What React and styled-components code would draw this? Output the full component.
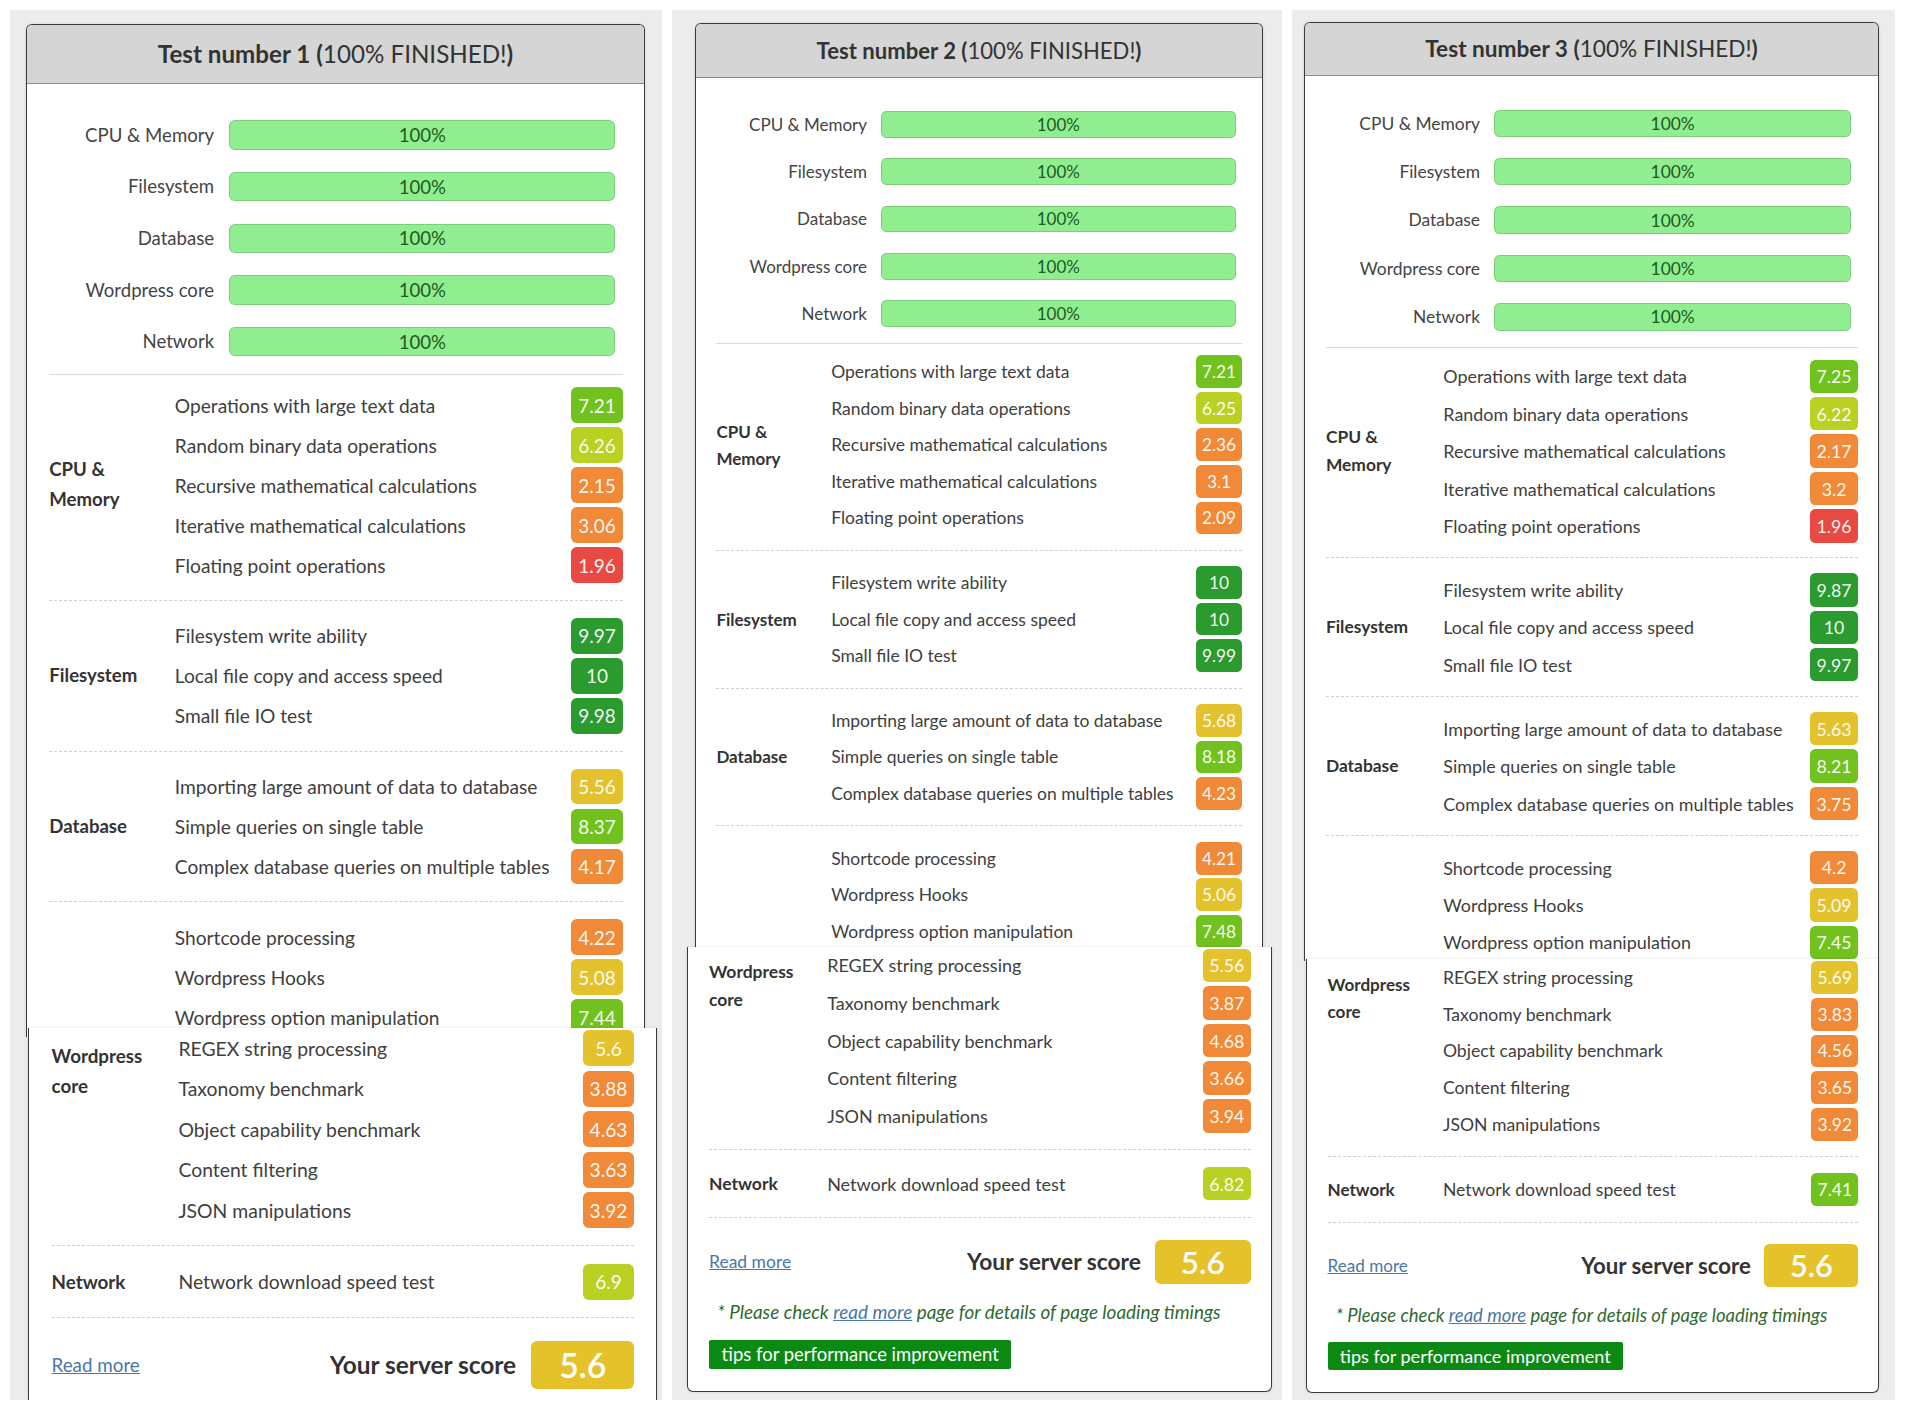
import React from "react";
import styled, { createGlobalStyle } from "styled-components";

const GlobalStyle = createGlobalStyle`
  html, body { margin: 0; padding: 0; background: #ffffff; }
  body {
    font-family: Lato, "Open Sans", "Liberation Sans", sans-serif;
    color: #404040;
  }
  * { box-sizing: border-box; }
`;

/* ---------- layout ---------- */

const Board = styled.main`
  display: flex;
  gap: 10px;
  width: 1905px;
  padding: 10px 10px 0;
`;

const Frame = styled.section`
  flex: 0 0 ${(p) => p.$w}px;
  height: 1390px;
  padding-top: ${(p) => p.$top}px;
  background: #ececec;
  overflow: hidden;
  display: flex;
  flex-direction: column;
`;

const Slice = styled.div`
  position: relative;
  z-index: ${(p) => (p.$head ? 0 : 1)};
  font-size: ${(p) => p.$fs}px;
  margin: ${(p) => (p.$lift ? -p.$lift : 0)}px ${(p) => p.$r}px 0 ${(p) => p.$l}px;
  background: #ffffff;
  border-left: 1.5px solid #3b3b3b;
  border-right: 1.5px solid #3b3b3b;
  border-top: ${(p) => (p.$head ? "1.5px solid #3b3b3b" : "none")};
  border-bottom: ${(p) => (p.$foot ? "1.5px solid #3b3b3b" : "none")};
  border-radius: ${(p) => (p.$head ? "6px 6px 0 0" : p.$foot ? "0 0 6px 6px" : "0")};
  box-shadow: 0 0 3px rgba(0, 0, 0, 0.12);
  flex: ${(p) => (p.$open ? "1 0 auto" : "none")};
  padding-bottom: ${(p) => (p.$foot ? "1.26em" : "0")};
`;

/* ---------- header ---------- */

const Header = styled.header`
  height: ${(p) => p.$h}em;
  display: flex;
  align-items: center;
  justify-content: center;
  background: #d5d5d5;
  border-bottom: 1px solid #8c8c8c;
  border-radius: 5px 5px 0 0;
`;

const Title = styled.h2`
  margin: 0;
  font-size: 1.3em;
  font-weight: 700;
  color: #333333;
  white-space: nowrap;
`;

const TitleNote = styled.span`
  font-weight: 400;
`;

/* ---------- progress bars ---------- */

const Bars = styled.div`
  display: grid;
  grid-template-columns: 10.06em 1fr;
  column-gap: 0.82em;
  row-gap: 1.2em;
  align-items: center;
  padding: 1.95em 1.55em 0.95em 0;
`;

const BarLabel = styled.span`
  text-align: right;
  white-space: nowrap;
  color: #444444;
  line-height: 1;
`;

const Track = styled.div`
  position: relative;
  height: 1.58em;
  border-radius: 0.3em;
  background: #e6e6e6;
  overflow: hidden;
`;

const Fill = styled.div`
  height: 100%;
  background: #90ee90;
  border: 1px solid #7ccd7c;
  border-radius: 0.3em;
`;

const BarText = styled.span`
  position: absolute;
  inset: 0;
  display: flex;
  align-items: center;
  justify-content: center;
  color: #1f5a1f;
`;

const Rule = styled.hr`
  margin: 0 1.15em 0 1.2em;
  border: 0;
  border-top: 1px solid #dadada;
`;

/* ---------- result sections ---------- */

const Section = styled.div`
  display: grid;
  grid-template-columns: 6.75em 1fr;
  margin: 0 1.15em 0 1.2em;
  padding: ${(p) => p.$pt}em 0 ${(p) => p.$pb}em;
  border-bottom: ${(p) => (p.$dash ? "1px dashed #cfcfcf" : "none")};
`;

const Category = styled.div`
  align-self: ${(p) => (p.$top ? "start" : "center")};
  padding-top: ${(p) => (p.$top ? "0.68em" : "0")};
  max-width: 5.6em;
  font-weight: 700;
  line-height: 1.6;
  color: #333333;
`;

const Rows = styled.div`
  display: flex;
  flex-direction: column;
`;

const Row = styled.div`
  height: 2.15em;
  display: flex;
  align-items: center;
  justify-content: space-between;
  gap: 0.6em;
`;

const RowName = styled.span`
  font-size: 1.03em;
  white-space: nowrap;
  color: #404040;
`;

const Badge = styled.span`
  flex: 0 0 2.7em;
  height: 1.88em;
  border-radius: 0.3em;
  display: flex;
  align-items: center;
  justify-content: center;
  font-size: 1.02em;
  color: rgba(255, 255, 255, 0.95);
  background: ${(p) => p.$bg};
`;

/* ---------- footer ---------- */

const ScoreRow = styled.div`
  display: flex;
  align-items: center;
  justify-content: space-between;
  margin: 0 1.15em 0 1.2em;
  padding-top: 1.26em;
`;

const ReadMore = styled.a`
  color: #4a77a6;
  text-decoration: underline;
  cursor: pointer;
`;

const ScoreGroup = styled.div`
  display: flex;
  align-items: center;
  gap: 0.8em;
`;

const ScoreLabel = styled.span`
  font-size: 1.3em;
  font-weight: 700;
  color: #333333;
`;

const ScoreBadge = styled.span`
  font-size: 1.8em;
  font-weight: 600;
  width: 3.05em;
  height: 1.39em;
  border-radius: 0.18em;
  display: flex;
  align-items: center;
  justify-content: center;
  color: #ffffff;
  background: #e6c22a;
`;

const Note = styled.p`
  margin: 0.85em 1.15em 0 1.55em;
  font-size: 1.08em;
  font-style: italic;
  line-height: 1.3;
  color: #2f6a2f;
`;

const NoteLink = styled.a`
  color: #4a77a6;
  text-decoration: underline;
`;

const Tips = styled.a`
  display: inline-block;
  margin: 0.85em 0 0 1.14em;
  font-size: 1.055em;
  height: 1.58em;
  line-height: 1.58em;
  padding: 0 0.68em;
  border-radius: 2px;
  background: #0b8a13;
  color: #ffffff;
  white-space: nowrap;
`;

/* ---------- data ---------- */

const GROUPS = [
  { key: "cpu", label: "CPU & Memory" },
  { key: "fs", label: "Filesystem" },
  { key: "db", label: "Database" },
  { key: "wp", label: "Wordpress core" },
  { key: "net", label: "Network" },
];

const NAMES = {
  cpu: [
    "Operations with large text data",
    "Random binary data operations",
    "Recursive mathematical calculations",
    "Iterative mathematical calculations",
    "Floating point operations",
  ],
  fs: ["Filesystem write ability", "Local file copy and access speed", "Small file IO test"],
  db: [
    "Importing large amount of data to database",
    "Simple queries on single table",
    "Complex database queries on multiple tables",
  ],
  wpA: ["Shortcode processing", "Wordpress Hooks", "Wordpress option manipulation"],
  wpB: [
    "REGEX string processing",
    "Taxonomy benchmark",
    "Object capability benchmark",
    "Content filtering",
    "JSON manipulations",
  ],
  net: ["Network download speed test"],
};

const TESTS = [
  {
    n: 1,
    width: 652,
    top: 14,
    header: 3.17,
    upper: { fs: 18.6, l: 16, r: 17, pad: 0.8 },
    lower: { fs: 18.8, l: 18, r: 5, pad: 0.8, lift: 9 },
    open: true,
    scores: {
      cpu: ["7.21", "6.26", "2.15", "3.06", "1.96"],
      fs: ["9.97", "10", "9.98"],
      db: ["5.56", "8.37", "4.17"],
      wpA: ["4.22", "5.08", "7.44"],
      wpB: ["5.6", "3.88", "4.63", "3.63", "3.92"],
      net: ["6.9"],
    },
  },
  {
    n: 2,
    width: 610,
    top: 13,
    header: 3.17,
    upper: { fs: 17, l: 23, r: 19, pad: 0.8 },
    lower: { fs: 17.5, l: 15, r: 10, pad: 0.83, lift: 3 },
    open: false,
    scores: {
      cpu: ["7.21", "6.25", "2.36", "3.1", "2.09"],
      fs: ["10", "10", "9.99"],
      db: ["5.68", "8.18", "4.23"],
      wpA: ["4.21", "5.06", "7.48"],
      wpB: ["5.56", "3.87", "4.68", "3.66", "3.94"],
      net: ["6.82"],
    },
  },
  {
    n: 3,
    width: 603,
    top: 12,
    header: 3.03,
    upper: { fs: 17.4, l: 12, r: 16, pad: 0.735 },
    lower: { fs: 17.1, l: 14, r: 16, pad: 0.8, lift: 2 },
    open: false,
    scores: {
      cpu: ["7.25", "6.22", "2.17", "3.2", "1.96"],
      fs: ["9.87", "10", "9.97"],
      db: ["5.63", "8.21", "3.75"],
      wpA: ["4.2", "5.09", "7.45"],
      wpB: ["5.69", "3.83", "4.56", "3.65", "3.92"],
      net: ["7.41"],
    },
  },
];

const badgeColor = (value) => {
  const v = parseFloat(value);
  if (v >= 9) return "#2b9a2f";
  if (v >= 7) return "#72c21f";
  if (v >= 6) return "#bad023";
  if (v >= 5) return "#e3c22d";
  if (v >= 2) return "#f08a38";
  return "#e84a43";
};

/* ---------- pieces ---------- */

function ResultRows({ names, values }) {
  return (
    <Rows>
      {names.map((name, i) => (
        <Row key={name}>
          <RowName>{name}</RowName>
          <Badge $bg={badgeColor(values[i])}>{values[i]}</Badge>
        </Row>
      ))}
    </Rows>
  );
}

function ResultSection({ label, names, values, pt, pb, dash = true, top = false }) {
  return (
    <Section $pt={pt} $pb={pb} $dash={dash}>
      <Category $top={top}>{label}</Category>
      <ResultRows names={names} values={values} />
    </Section>
  );
}

function TestPanel({ test }) {
  const { upper, lower, scores } = test;
  return (
    <Frame $w={test.width} $top={test.top}>
      <Slice $head $fs={upper.fs} $l={upper.l} $r={upper.r}>
        <Header $h={test.header}>
          <Title>
            Test number {test.n} (<TitleNote>100% FINISHED!</TitleNote>)
          </Title>
        </Header>
        <Bars>
          {GROUPS.map((g) => (
            <React.Fragment key={g.key}>
              <BarLabel>{g.label}</BarLabel>
              <Track>
                <Fill style={{ width: "100%" }} />
                <BarText>100%</BarText>
              </Track>
            </React.Fragment>
          ))}
        </Bars>
        <Rule />
        <ResultSection label="CPU & Memory" names={NAMES.cpu} values={scores.cpu} pt={0.55} pb={upper.pad} />
        <ResultSection label="Filesystem" names={NAMES.fs} values={scores.fs} pt={upper.pad} pb={upper.pad} />
        <ResultSection label="Database" names={NAMES.db} values={scores.db} pt={upper.pad} pb={upper.pad} />
        <ResultSection label="" names={NAMES.wpA} values={scores.wpA} pt={upper.pad} pb={0} dash={false} />
      </Slice>
      <Slice
        $fs={lower.fs}
        $l={lower.l}
        $r={lower.r}
        $lift={lower.lift}
        $foot={!test.open}
        $open={test.open}
      >
        <ResultSection label="Wordpress core" names={NAMES.wpB} values={scores.wpB} pt={0} pb={lower.pad} top />
        <ResultSection label="Network" names={NAMES.net} values={scores.net} pt={lower.pad} pb={lower.pad} />
        <ScoreRow>
          <ReadMore>Read more</ReadMore>
          <ScoreGroup>
            <ScoreLabel>Your server score</ScoreLabel>
            <ScoreBadge>5.6</ScoreBadge>
          </ScoreGroup>
        </ScoreRow>
        {!test.open && (
          <>
            <Note>
              * Please check <NoteLink>read more</NoteLink> page for details of page loading timings
            </Note>
            <Tips>tips for performance improvement</Tips>
          </>
        )}
      </Slice>
    </Frame>
  );
}

export default function App() {
  return (
    <>
      <GlobalStyle />
      <Board>
        {TESTS.map((t) => (
          <TestPanel key={t.n} test={t} />
        ))}
      </Board>
    </>
  );
}
